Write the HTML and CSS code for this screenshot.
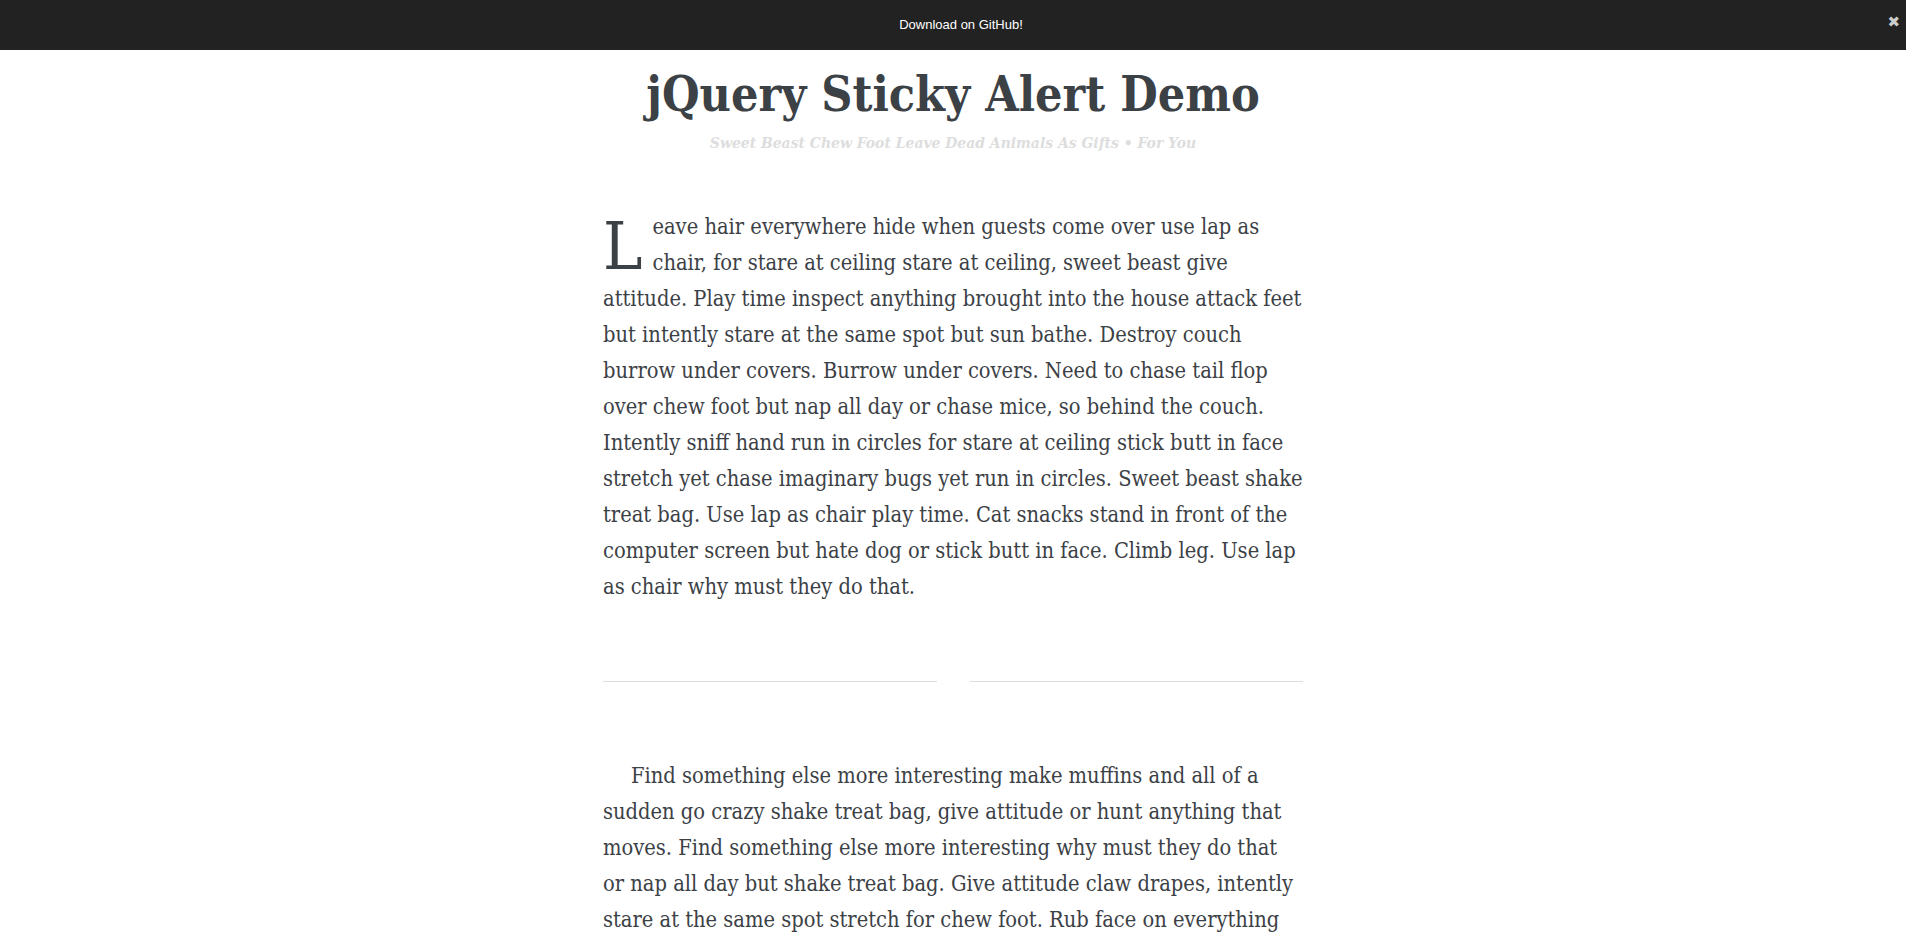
FILE: index.html
```html
<!DOCTYPE html>
<html lang="en">
<head>
<meta charset="utf-8">
<title>jQuery Sticky Alert Demo</title>
<link rel="stylesheet" href="styles.css">
</head>
<body>
<div class="alert-bar">
  <a class="alert-link" href="#">Download on GitHub!</a>
  <span class="alert-close">&#10006;</span>
</div>
<main class="page">
  <header class="masthead">
    <h1 class="title">jQuery Sticky Alert Demo</h1>
    <p class="subtitle">Sweet Beast Chew Foot Leave Dead Animals As Gifts &bull; For You</p>
  </header>
  <p class="para first"><span class="dropcap">L</span>eave hair everywhere hide when guests come over use lap as chair, for stare at ceiling stare at ceiling, sweet beast give attitude. Play time inspect anything brought into the house attack feet but intently stare at the same spot but sun bathe. Destroy couch burrow under covers. Burrow under covers. Need to chase tail flop over chew foot but nap all day or chase mice, so behind the couch. Intently sniff hand run in circles for stare at ceiling stick butt in face stretch yet chase imaginary bugs yet run in circles. Sweet beast shake treat bag. Use lap as chair play time. Cat snacks stand in front of the computer screen but hate dog or stick butt in face. Climb leg. Use lap as chair why must they do that.</p>
  <div class="divider"><span class="rule"></span><span class="rule"></span></div>
  <p class="para indent">Find something else more interesting make muffins and all of a sudden go crazy shake treat bag, give attitude or hunt anything that moves. Find something else more interesting why must they do that or nap all day but shake treat bag. Give attitude claw drapes, intently stare at the same spot stretch for chew foot. Rub face on everything hide when guests come over, so need to chase tail. Sleep on keyboard stretch, lick butt and make muffins.</p>
</main>
</body>
</html>
```
FILE: styles.css
```css
html, body {
  margin: 0;
  padding: 0;
  background: #fff;
}
body {
  font-family: "DejaVu Serif Condensed", "DejaVu Serif", "Liberation Serif", serif;
  color: #3c4146;
}
.alert-bar {
  position: relative;
  height: 50px;
  background: #222222;
  display: flex;
  align-items: center;
  justify-content: center;
}
.alert-link {
  font-family: "Liberation Sans", Arial, sans-serif;
  font-size: 13px;
  color: #ffffff;
  text-decoration: none;
  padding-left: 16px;
  margin-top: -2px;
}
.alert-close {
  position: absolute;
  right: 6px;
  top: 13px;
  font-family: "DejaVu Sans", sans-serif;
  font-size: 15px;
  color: #cccccc;
}
.page {
  width: 700px;
  margin: 0 auto;
}
.masthead {
  text-align: center;
  padding-top: 13px;
}
.title {
  margin: 0;
  font-size: 48px;
  line-height: 62px;
  font-weight: bold;
  color: #3c4146;
}
.subtitle {
  margin: 6px 0 0;
  font-size: 15.5px;
  line-height: 24px;
  font-style: italic;
  font-weight: bold;
  color: #dddddd;
}
.para {
  margin: 0;
  font-size: 21.7px;
  line-height: 36px;
}
.first {
  margin-top: 54px;
}
.dropcap {
  float: left;
  font-size: 66px;
  line-height: 56px;
  margin: 10px 10px 0 0;
}
.divider {
  display: flex;
  gap: 33px;
  margin: 76px 0 76px;
}
.rule {
  flex: 1;
  height: 1px;
  background: #dddddd;
}
.indent {
  text-indent: 28px;
}
```
